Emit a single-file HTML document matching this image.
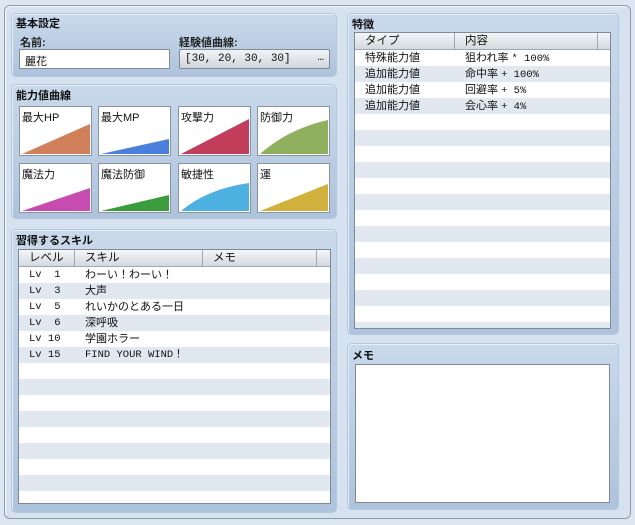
<!DOCTYPE html>
<html><head><meta charset="utf-8"><style>
*{box-sizing:border-box;margin:0;padding:0}
body{width:635px;height:525px;background:#dde7f2;font-family:"Liberation Sans","Noto Sans CJK JP",sans-serif;font-size:11px;color:#111;position:relative;overflow:hidden}
.abs{position:absolute}
.outer{left:4px;top:5px;width:627px;height:514px;border:1px solid #8e9aa8;border-radius:6px;background:#d6e2ef;box-shadow:inset 1px 1px 0 #f4f8fc}
.grp{position:absolute;border-radius:5px;background:linear-gradient(#c9d9eb,#aec3dc);border:1px solid #b4c6dc;box-shadow:inset 1px 1px 0 #e6eef7}
.ttl{position:absolute;font-weight:bold;font-size:11px}
.lbl{position:absolute;font-size:11px;font-weight:bold;color:#222}
.inp{position:absolute;background:#fff;border:1px solid #7f8a96;padding:3px 5px;font-size:11px}
.btn{position:absolute;background:linear-gradient(#f2f4f7,#cfd5dc);border:1px solid #7f8a96;border-radius:2px;padding:3px 5px;font-family:"Liberation Mono","Noto Sans CJK JP",monospace;font-size:11px}
.cell{position:absolute;width:73px;height:50px;background:#fff;border:1px solid #8a939e}
.cell span{position:absolute;left:2px;top:2px;font-size:11px}
.cell svg{position:absolute;left:0;top:0}
.tbl{position:absolute;background:repeating-linear-gradient(#fff 0 16px,#e1e8ef 16px 32px);border:1px solid #7f8a96;overflow:hidden}
.hdr{position:absolute;left:0;top:0;right:0;height:17px;background:linear-gradient(#f4f6f8,#d3d9e0);border-bottom:1px solid #a0a8b2}
.hdr div{position:absolute;top:0;height:16px;border-right:1px solid #a0a8b2;padding-left:10px;font-size:11.5px;line-height:16px}
.row{position:absolute;left:0;height:16px;line-height:16px;font-size:11px;white-space:pre}
.mono{font-family:"Liberation Mono","Noto Sans CJK JP",monospace;font-size:10.5px;white-space:pre}
</style></head><body>
<div class="abs outer"></div>

<div class="grp" style="left:11px;top:13px;width:326px;height:64px"></div>
<div class="ttl" style="left:16px;top:15px">基本設定</div>
<div class="lbl" style="left:20px;top:34px">名前:</div>
<div class="inp" style="left:19px;top:49px;width:151px;height:20px">麗花</div>
<div class="lbl" style="left:179px;top:34px">経験値曲線:</div>
<div class="btn" style="left:179px;top:49px;width:151px;height:20px">[30, 20, 30, 30]<span style="position:absolute;right:5px;top:2px">…</span></div>

<div class="grp" style="left:11px;top:84px;width:326px;height:135px"></div>
<div class="ttl" style="left:16px;top:87px">能力値曲線</div>

<div class="cell" style="left:19px;top:106px"><svg width="73" height="50"><polygon points="2,47 70,17 70,47" fill="#d2805c"/></svg><span>最大HP</span></div>
<div class="cell" style="left:98px;top:106px"><svg width="73" height="50"><polygon points="2,47 70,32 70,47" fill="#4a80dc"/></svg><span>最大MP</span></div>
<div class="cell" style="left:178px;top:106px"><svg width="73" height="50"><polygon points="2,47 70,12 70,47" fill="#c23c5c"/></svg><span>攻撃力</span></div>
<div class="cell" style="left:257px;top:106px"><svg width="73" height="50"><path d="M2,47 Q30,22 70,13 L70,47Z" fill="#8fb05e"/></svg><span>防御力</span></div>
<div class="cell" style="left:19px;top:163px"><svg width="73" height="50"><polygon points="2,47 70,24 70,47" fill="#c64cb0"/></svg><span>魔法力</span></div>
<div class="cell" style="left:98px;top:163px"><svg width="73" height="50"><polygon points="2,47 70,31 70,47" fill="#3a9c3c"/></svg><span>魔法防御</span></div>
<div class="cell" style="left:178px;top:163px"><svg width="73" height="50"><path d="M2,47 Q28,25 70,19 L70,47Z" fill="#4cb0e0"/></svg><span>敏捷性</span></div>
<div class="cell" style="left:257px;top:163px"><svg width="73" height="50"><polygon points="2,47 70,20 70,47" fill="#d2b03c"/></svg><span>運</span></div>

<div class="grp" style="left:11px;top:229px;width:326px;height:284px"></div>
<div class="ttl" style="left:16px;top:232px">習得するスキル</div>
<div class="tbl" style="left:18px;top:249px;width:313px;height:255px;background-position:0 17px">
 <div class="hdr"><div style="left:0;width:56px">レベル</div><div style="left:56px;width:128px">スキル</div><div style="left:184px;width:114px">メモ</div></div>
 <div class="row mono" style="top:17px;left:10px">Lv  1</div><div class="row" style="top:17px;left:66px">わーい！わーい！</div>
 <div class="row mono" style="top:33px;left:10px">Lv  3</div><div class="row" style="top:33px;left:66px">大声</div>
 <div class="row mono" style="top:49px;left:10px">Lv  5</div><div class="row" style="top:49px;left:66px">れいかのとある一日</div>
 <div class="row mono" style="top:65px;left:10px">Lv  6</div><div class="row" style="top:65px;left:66px">深呼吸</div>
 <div class="row mono" style="top:81px;left:10px">Lv 10</div><div class="row" style="top:81px;left:66px">学園ホラー</div>
 <div class="row mono" style="top:97px;left:10px">Lv 15</div><div class="row mono" style="top:97px;left:66px">FIND YOUR WIND！</div>
</div>

<div class="grp" style="left:347px;top:13px;width:272px;height:322px"></div>
<div class="ttl" style="left:352px;top:16px">特徴</div>
<div class="tbl" style="left:354px;top:32px;width:257px;height:297px;background-position:0 17px">
 <div class="hdr"><div style="left:0;width:100px">タイプ</div><div style="left:100px;width:143px">内容</div></div>
 <div class="row" style="top:17px;left:10px">特殊能力値</div><div class="row" style="top:17px;left:110px">狙われ率 <span class="mono">* 100%</span></div>
 <div class="row" style="top:33px;left:10px">追加能力値</div><div class="row" style="top:33px;left:110px">命中率 <span class="mono">+ 100%</span></div>
 <div class="row" style="top:49px;left:10px">追加能力値</div><div class="row" style="top:49px;left:110px">回避率 <span class="mono">+ 5%</span></div>
 <div class="row" style="top:65px;left:10px">追加能力値</div><div class="row" style="top:65px;left:110px">会心率 <span class="mono">+ 4%</span></div>
</div>

<div class="grp" style="left:347px;top:343px;width:272px;height:167px"></div>
<div class="ttl" style="left:352px;top:347px">メモ</div>
<div class="abs" style="left:355px;top:364px;width:255px;height:139px;background:#fff;border:1px solid #7f8a96"></div>
</body></html>
